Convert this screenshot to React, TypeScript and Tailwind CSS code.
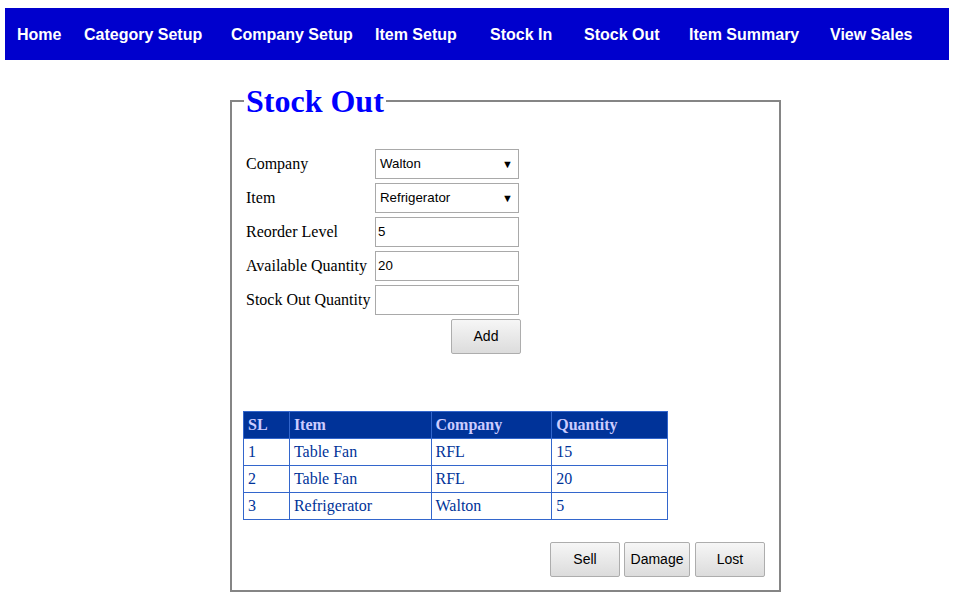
import React from "react";

const navItems: [string, string][] = [
  ["Home", "w-[67px]"],
  ["Category Setup", "w-[147px]"],
  ["Company Setup", "w-[144px]"],
  ["Item Setup", "w-[115px]"],
  ["Stock In", "w-[94px]"],
  ["Stock Out", "w-[105px]"],
  ["Item Summary", "w-[141px]"],
  ["View Sales", "w-[110px]"],
];

const rows = [
  ["1", "Table Fan", "RFL", "15"],
  ["2", "Table Fan", "RFL", "20"],
  ["3", "Refrigerator", "Walton", "5"],
];

function Select({ value }: { value: string }) {
  return (
    <div className="flex h-[30px] w-[144px] items-center justify-between border border-[#a9a9a9] bg-white pl-[4px] pr-[5px] text-[13.3px] text-black [font-family:'Liberation_Sans',Arial,sans-serif]">
      <span>{value}</span>
      <span className="text-[11px] leading-none">▼</span>
    </div>
  );
}

function Input({ value }: { value: string }) {
  return (
    <div className="flex h-[30px] w-[144px] items-center border border-[#a9a9a9] bg-white pl-[2px] text-[13.3px] text-black [font-family:'Liberation_Sans',Arial,sans-serif]">
      {value}
    </div>
  );
}

function Btn({ label, w }: { label: string; w: string }) {
  return (
    <div
      className={`flex h-[35px] ${w} items-center justify-center rounded-[2px] border border-[#adadad] bg-gradient-to-b from-[#f6f6f6] to-[#dcdcdc] text-[14px] text-black [font-family:'Liberation_Sans',Arial,sans-serif]`}
    >
      {label}
    </div>
  );
}

export default function App() {
  return (
    <div className="min-h-[611px] w-[958px] bg-white pt-[8px] [font-family:'Liberation_Serif','Times_New_Roman',serif]">
      <nav className="mx-[5px] flex h-[52px] w-[944px] items-center bg-[#0000cd] pl-[12px] pt-[2px]">
        {navItems.map(([t, w]) => (
          <div
            key={t}
            className={`${w} shrink-0 text-[16px] font-bold text-white [font-family:'Liberation_Sans',Arial,sans-serif]`}
          >
            {t}
          </div>
        ))}
      </nav>

      <fieldset className="ml-[230px] mt-[23px] w-[551px] border-2 border-[#858585] px-[14px] pb-[13px] pr-[14px]">
        <legend className="ml-[-2px] px-[2px] text-[32px] font-bold leading-[36px] text-[#0000ff]">
          Stock Out
        </legend>

        <div className="mt-[30px] flex flex-col gap-[4px] text-[16px] text-black">
          <div className="flex items-center">
            <div className="w-[129px]">Company</div>
            <Select value="Walton" />
          </div>
          <div className="flex items-center">
            <div className="w-[129px]">Item</div>
            <Select value="Refrigerator" />
          </div>
          <div className="flex items-center">
            <div className="w-[129px]">Reorder Level</div>
            <Input value="5" />
          </div>
          <div className="flex items-center">
            <div className="w-[129px]">Available Quantity</div>
            <Input value="20" />
          </div>
          <div className="flex items-center">
            <div className="w-[129px]">Stock Out Quantity</div>
            <Input value="" />
          </div>
          <div className="flex">
            <div className="ml-[205px]">
              <div className="flex h-[35px] w-[70px] items-center justify-center rounded-[2px] border border-[#adadad] bg-gradient-to-b from-[#f6f6f6] to-[#dcdcdc] text-[14px] text-black [font-family:'Liberation_Sans',Arial,sans-serif]">
                Add
              </div>
            </div>
          </div>
        </div>

        <table className="ml-[-3px] mt-[57px] w-[425px] border-collapse text-[16px]">
          <thead>
            <tr className="h-[27px] bg-[#003399] text-left text-[#ccccff]">
              <th className="w-[46px] border border-[#3366cc] px-[4px] font-bold">SL</th>
              <th className="w-[142px] border border-[#3366cc] px-[4px] font-bold">Item</th>
              <th className="w-[121px] border border-[#3366cc] px-[4px] font-bold">Company</th>
              <th className="w-[116px] border border-[#3366cc] px-[4px] font-bold">Quantity</th>
            </tr>
          </thead>
          <tbody>
            {rows.map((r) => (
              <tr key={r[0]} className="h-[27px] text-[#003399]">
                {r.map((c, i) => (
                  <td key={i} className="border border-[#3366cc] px-[4px]">
                    {c}
                  </td>
                ))}
              </tr>
            ))}
          </tbody>
        </table>

        <div className="mt-[22px] flex justify-end gap-[4px]">
          <Btn label="Sell" w="w-[70px]" />
          <Btn label="Damage" w="w-[66px]" />
          <div className="ml-[1px]">
            <Btn label="Lost" w="w-[70px]" />
          </div>
        </div>
      </fieldset>
    </div>
  );
}
